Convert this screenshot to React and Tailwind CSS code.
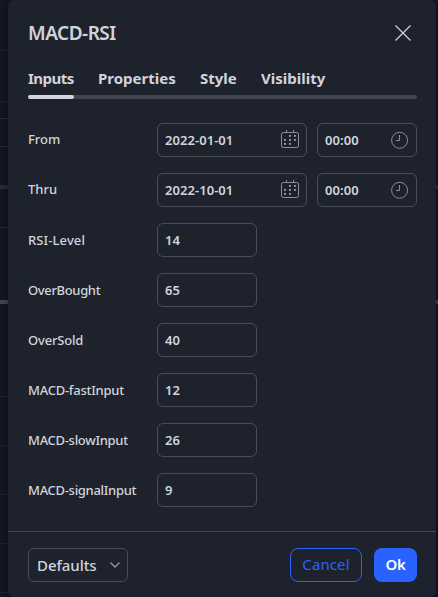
import React from "react";

const tabs = [
  { name: "Inputs", style: "w-[46px] mr-6 tracking-[-0.5px]" },
  { name: "Properties", style: "w-[78px] mr-6 tracking-[0px]" },
  { name: "Style", style: "w-[37px] mr-6 tracking-[0px]" },
  { name: "Visibility", style: "w-[66px] tracking-[0px]" },
];

const numbers = [
  { label: "RSI-Level", value: "14", style: "tracking-[0.1px]" },
  { label: "OverBought", value: "65", style: "tracking-[-0.35px]" },
  { label: "OverSold", value: "40", style: "tracking-[-0.2px]" },
  { label: "MACD-fastInput", value: "12", style: "tracking-[-0.25px]" },
  { label: "MACD-slowInput", value: "26", style: "tracking-[-0.3px]" },
  { label: "MACD-signalInput", value: "9", style: "tracking-[-0.3px]" },
];

const thinLines = [50, 101, 118, 146, 227, 396, 445, 494, 543, 592];

const calendarDays = [[8, 5], [13, 5], [3, 9], [8, 9], [13, 9], [3, 13], [8, 13]];

function Backdrop() {
  return (
    <svg className="absolute inset-0" width="438" height="597" shapeRendering="crispEdges">
      {thinLines.map((y) => (
        <rect key={y} y={y} width="438" height="1" fill={y > 110 && y < 230 ? "#2b2e38" : "#20232e"} />
      ))}
      <rect y="185" width="438" height="4" fill="#2a2d37" />
      <rect y="300" width="438" height="4" fill="#434651" />
    </svg>
  );
}

function Calendar() {
  return (
    <svg className="mb-0.5" width="18" height="18" viewBox="0 0 18 18" fill="none" stroke="#8c8f99">
      <rect x=".5" y="2.5" width="17" height="15" rx="1.8" />
      <path d="M5.5 0v3M12.5 0v3" />
      <g fill="#a3a6af" stroke="none">
        {calendarDays.map(([x, y]) => (
          <rect key={`${x}-${y}`} x={x} y={y} width="1.8" height="1.8" />
        ))}
      </g>
    </svg>
  );
}

function Clock() {
  return (
    <svg width="18" height="18" viewBox="0 0 18 18" fill="none" stroke="#8c8f99">
      <circle cx="8.6" cy="9.3" r="8" />
      <path d="M8.5 4v5.5H5" />
    </svg>
  );
}

function Field({ children, className }) {
  return (
    <div className={`flex h-[34px] items-center justify-between rounded-md border border-[#4a4d58] px-[7px] text-[13px] font-semibold tracking-[-0.05px] ${className}`}>
      {children}
    </div>
  );
}

function Label({ children, className = "" }) {
  return <div className={`w-[129px] shrink-0 text-[13px] leading-[34px] font-medium whitespace-nowrap ${className}`}>{children}</div>;
}

function DateRow({ label, date }) {
  return (
    <div className="flex h-[34px]">
      <Label className="-mt-px">{label}</Label>
      <Field className="w-[150px]">
        <span className="pt-px tracking-[0.05px]">{date}</span>
        <Calendar />
      </Field>
      <Field className="ml-2.5 w-[100px]">
        <span className="pt-px tracking-[0.1px]">00:00</span>
        <Clock />
      </Field>
    </div>
  );
}

export default function App() {
  return (
    <div className="relative h-[597px] w-[438px] overflow-hidden bg-[#131722] font-['Noto_Sans','Open_Sans',sans-serif] text-[#d1d4dc]">
      <Backdrop />
      <div className="relative ml-2 flex h-[597px] w-[428px] flex-col rounded-md bg-[#1e222d] shadow-[0_2px_8px_rgba(0,0,0,0.5)]">
        <header className="flex h-[66px] items-center justify-between pr-[25px] pl-5">
          <h1 className="text-[19px] font-semibold tracking-[-0.5px]">MACD-RSI</h1>
          <svg width="16" height="16" viewBox="0 0 16 16" stroke="#d1d4dc" strokeWidth="1.2">
            <path d="M.5.5l15 15M15.5.5l-15 15" />
          </svg>
        </header>
        <nav className="flex h-[29px] pl-5 text-[15px] leading-6 font-bold whitespace-nowrap">
          {tabs.map((tab) => (
            <div key={tab.name} className={tab.style}>{tab.name}</div>
          ))}
        </nav>
        <div className="ml-5 h-1 w-[389px] rounded-full bg-[#434651]">
          <div className="h-1 w-[46px] rounded-full bg-[#d1d4dc]" />
        </div>
        <main className="mt-6 flex flex-col gap-4 pl-5">
          <DateRow label="From" date="2022-01-01" />
          <DateRow label="Thru" date="2022-10-01" />
          {numbers.map((row) => (
            <div key={row.label} className="flex h-[34px]">
              <Label className={row.style}>{row.label}</Label>
              <Field className="w-[100px]">
                <span className="pt-px">{row.value}</span>
              </Field>
            </div>
          ))}
        </main>
        <footer className="mt-6 flex h-[66px] items-start border-t border-[#434651] pt-4 pl-5 text-[15px]">
          <button className="flex h-[34px] w-[100px] items-center justify-between rounded-md border border-[#4a4d58] pr-[7px] pl-2 font-medium tracking-[-0.05px]">
            Defaults
            <svg width="10" height="6" viewBox="0 0 10 6" fill="none" stroke="#9598a1" strokeWidth="1.3">
              <path d="M.5.5L5 5 9.5.5" />
            </svg>
          </button>
          <button className="ml-[162px] h-[34px] w-[72px] rounded-lg border border-[#2962ff] pb-0.5 text-[#2962ff] tracking-[0.1px]">Cancel</button>
          <button className="ml-3 h-[34px] w-[43px] rounded-lg bg-[#2962ff] pb-0.5 font-semibold tracking-[-0.3px] text-white">Ok</button>
        </footer>
      </div>
    </div>
  );
}
